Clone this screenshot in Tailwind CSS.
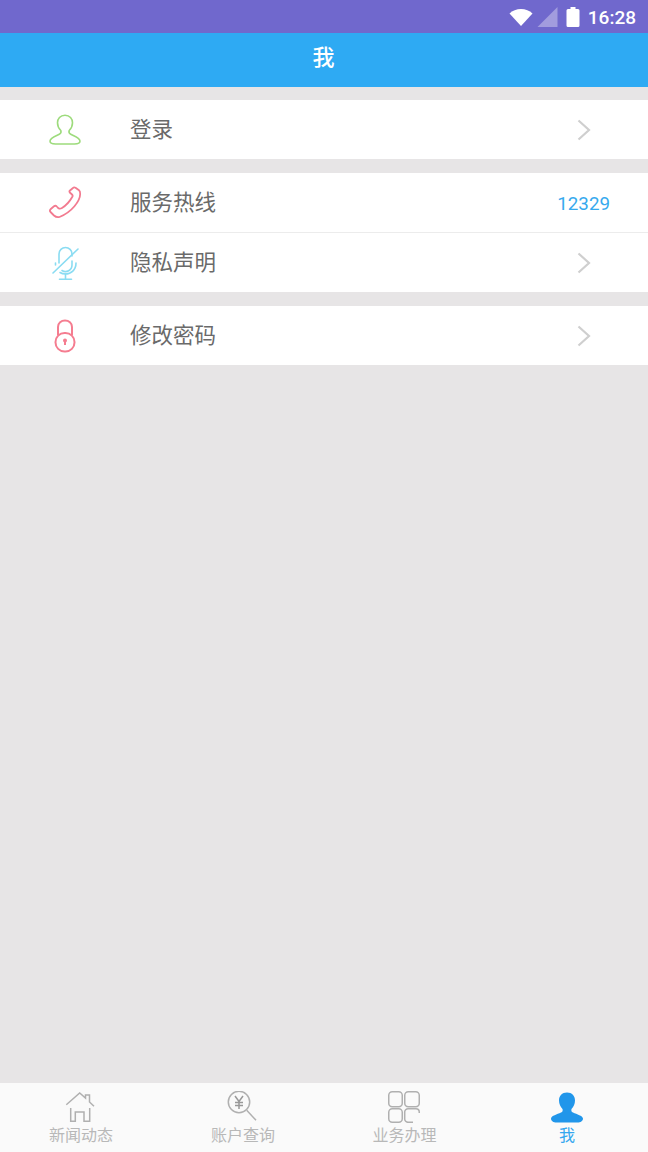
<!DOCTYPE html>
<html lang="zh">
<head>
<meta charset="utf-8">
<script src="https://cdn.jsdelivr.net/npm/@tailwindcss/browser@4"></script>
<title>我</title>
</head>
<body class="w-[648px] h-[1152px] overflow-hidden bg-[#e7e5e6] flex flex-col font-['Noto_Sans_CJK_SC','Noto_Sans',sans-serif]">
<div class="h-[33px] bg-[#7068cd] flex items-center justify-end pr-[12px] pt-[1px] text-white">
  <svg width="24" height="18" viewBox="0 0 24 18" class="mr-[4px]"><path d="M0.500 5.500C3.500 2.500 7.500 1 12 1s8.500 1.500 11.500 4.500L12 18z" fill="#fff"/></svg>
  <svg width="21" height="20" viewBox="0 0 21 20" class="mr-[8px]"><path d="M0.500 20L20.500 0v20z" fill="#fff" fill-opacity=".35"/></svg>
  <svg width="14" height="20" viewBox="0 0 14 20" class="mr-[8px]"><path d="M4.500 0h5v2H12a1.500 1.500 0 0 1 1.500 1.500V18.500A1.500 1.500 0 0 1 12 20H2a1.500 1.500 0 0 1-1.500-1.500V3.500A1.500 1.500 0 0 1 2 2h2.500z" fill="#fff"/></svg>
  <span class="text-[19px] font-['Roboto'] font-medium leading-none">16:28</span>
</div>
<header class="h-[54px] bg-[#2eaaf3] flex items-center justify-center text-white text-[22px] font-medium leading-none pb-[10px] pr-[1px]">我</header>

<main class="flex flex-col flex-1 pt-[13px] gap-[14px]">
  <a class="flex items-center h-[59px] bg-white">
    <span class="w-[130px] flex justify-center">
      <svg width="32" height="31" viewBox="0 0 32 31" fill="none" stroke="#9ddb7c" stroke-width="1.600"><path d="M16 1.200c-4.800 0-7.500 3.500-7.500 7.500 0 3.300 1.500 6 3.300 7.800 .5 1.500 0 3-1.500 3.700C7 22 1.500 23.500 1 27c0 2 2.500 3 5.500 3h19c3 0 5.500-1 5.500-3-.5-3.500-6-5-9.300-6.800-1.500-.7-2-2.200-1.500-3.700 1.800-1.800 3.300-4.500 3.300-7.800 0-4-2.700-7.500-7.500-7.500z"/></svg>
    </span>
    <span class="text-[21.5px] leading-none text-[#6a6a6a] pb-[3px]">登录</span>
    <svg width="14" height="22" viewBox="0 0 14 22" class="ml-auto mr-[57px]" fill="none" stroke="#cfcfcf" stroke-width="2.200"><path d="M1.500 1.500L12 11 1.500 20.500"/></svg>
  </a>

  <div class="flex flex-col">
    <a class="flex items-center h-[60px] bg-white border-b border-[#ececec]">
      <span class="w-[130px] flex justify-center">
        <svg width="34" height="34" viewBox="0 0 34 34" fill="none" stroke="#f27b90" stroke-width="1.800" stroke-linejoin="round"><path d="M25 2Q26 .8 27.500 1.700L31 4.300Q32.200 5.300 32.200 8C32 15 24 26 11.500 31Q8.500 31.800 6 29.500L2.500 26Q1.200 24.500 2.800 23L6 20.300Q7.500 19 8.800 20.500L10.500 22.300Q12 23.200 14 22C18 19.500 22 15 24.500 10.500Q25 9.500 24 8.500L21.800 6.500Q21 5.500 22 4.500Z"/></svg>
      </span>
      <span class="text-[21.5px] leading-none text-[#6a6a6a] pb-[3px]">服务热线</span>
      <span class="ml-auto mr-[38px] text-[18.800px] leading-none text-[#36a9ee] font-['Roboto'] pt-[3px]">12329</span>
    </a>
    <a class="flex items-center h-[59px] bg-white">
      <span class="w-[130px] flex justify-center">
        <svg width="34" height="34" viewBox="0 0 34 34" fill="none" stroke="#8adcf2" stroke-width="1.600" stroke-linecap="round"><path d="M11 17V8a6.500 6.500 0 0 1 13 0v2"/><path d="M24 15v4a6.500 6.500 0 0 1-10 5.500"/><path d="M28 17c0 7-5 11-10.500 11-2 0-4-.5-5.500-1.500"/><path d="M7.500 17v2"/><path d="M17.500 28v5M11.500 33.200h12"/><path d="M5 27L30 3"/></svg>
      </span>
      <span class="text-[21.5px] leading-none text-[#6a6a6a] pb-[3px]">隐私声明</span>
      <svg width="14" height="22" viewBox="0 0 14 22" class="ml-auto mr-[57px]" fill="none" stroke="#cfcfcf" stroke-width="2.200"><path d="M1.500 1.500L12 11 1.500 20.500"/></svg>
    </a>
  </div>

  <a class="flex items-center h-[59px] bg-white">
    <span class="w-[130px] flex justify-center">
      <svg width="22" height="34" viewBox="0 0 22 34" fill="none" stroke="#f57d90" stroke-width="2"><path d="M4 16V8c0-4 3.200-6.500 7-6.500S18 4 18 8v8"/><rect x="1.500" y="14" width="19" height="18.500" rx="9"/><circle cx="11" cy="21.500" r="2" fill="#f57d90" stroke="none"/><path d="M11 21.500v4.500"/></svg>
    </span>
    <span class="text-[21.5px] leading-none text-[#6a6a6a] pb-[3px]">修改密码</span>
    <svg width="14" height="22" viewBox="0 0 14 22" class="ml-auto mr-[57px]" fill="none" stroke="#cfcfcf" stroke-width="2.200"><path d="M1.500 1.500L12 11 1.500 20.500"/></svg>
  </a>
</main>

<nav class="h-[69px] bg-[#fafafa] grid grid-cols-4 text-[16px] leading-none text-[#b8b8b8]">
  <a class="flex flex-col items-center pt-[7px]">
    <span class="h-[34px] flex items-center">
      <svg width="32" height="30" viewBox="0 0 32 30" fill="none" stroke="#b0b0b0" stroke-width="1.500"><path d="M1.300 12.700L14.700 1 20.500 6V3h4v7L29 14.300"/><path d="M5.700 16v13.300h4.600V20H19v9.300h5.700V16"/></svg>
    </span>
    <span class="mt-[2px]">新闻动态</span>
  </a>
  <a class="flex flex-col items-center pt-[7px]">
    <span class="h-[34px] flex items-center">
      <svg width="34" height="32" viewBox="0 0 34 32" fill="none" stroke="#b0b0b0" stroke-width="1.500"><circle cx="13" cy="11" r="10.700"/><path d="M20.700 19.300L30 29.300"/><path d="M9 5L13 10.500 17 5M13 10.500V18M9 11.500h8M9 14.500h8" stroke="#999" stroke-width="1.500"/></svg>
    </span>
    <span class="mt-[2px]">账户查询</span>
  </a>
  <a class="flex flex-col items-center pt-[7px] -ml-[1px]">
    <span class="h-[34px] flex items-center -ml-[1px]">
      <svg width="32" height="32" viewBox="0 0 32 32" fill="none" stroke="#b0b0b0" stroke-width="1.500"><rect x=".75" y=".75" width="13.500" height="15" rx="3.500"/><rect x="16.750" y=".75" width="14.500" height="15" rx="3.500"/><rect x=".75" y="17.750" width="13.500" height="13.500" rx="3.500"/><path d="M31.250 22v-1a3.300 3.300 0 0 0-3.300-3.300H20a3.300 3.300 0 0 0-3.300 3.300V28a3.300 3.300 0 0 0 3.300 3.300h5"/></svg>
    </span>
    <span class="mt-[2px]">业务办理</span>
  </a>
  <a class="flex flex-col items-center pt-[7px] text-[#35a7ef]">
    <span class="h-[34px] flex items-center">
      <svg width="32" height="31" viewBox="0 0 32 31" fill="#2196ea"><path d="M16 .5c-5 0-8 3.500-8 8 0 3.500 1.500 6.500 3.500 8.500 .5 1.500 0 3-1.500 3.500C6 22.500 .5 23.500 0 26.500c0 2.500 2.500 4 5.500 4h21c3 0 5.500-1.500 5.500-4-.5-3-6-4-10-6-1.500-.5-2-2-1.500-3.500 2-2 3.500-5 3.500-8.500 0-4.500-3-8-8-8z"/></svg>
    </span>
    <span class="mt-[2px]">我</span>
  </a>
</nav>
</body>
</html>
